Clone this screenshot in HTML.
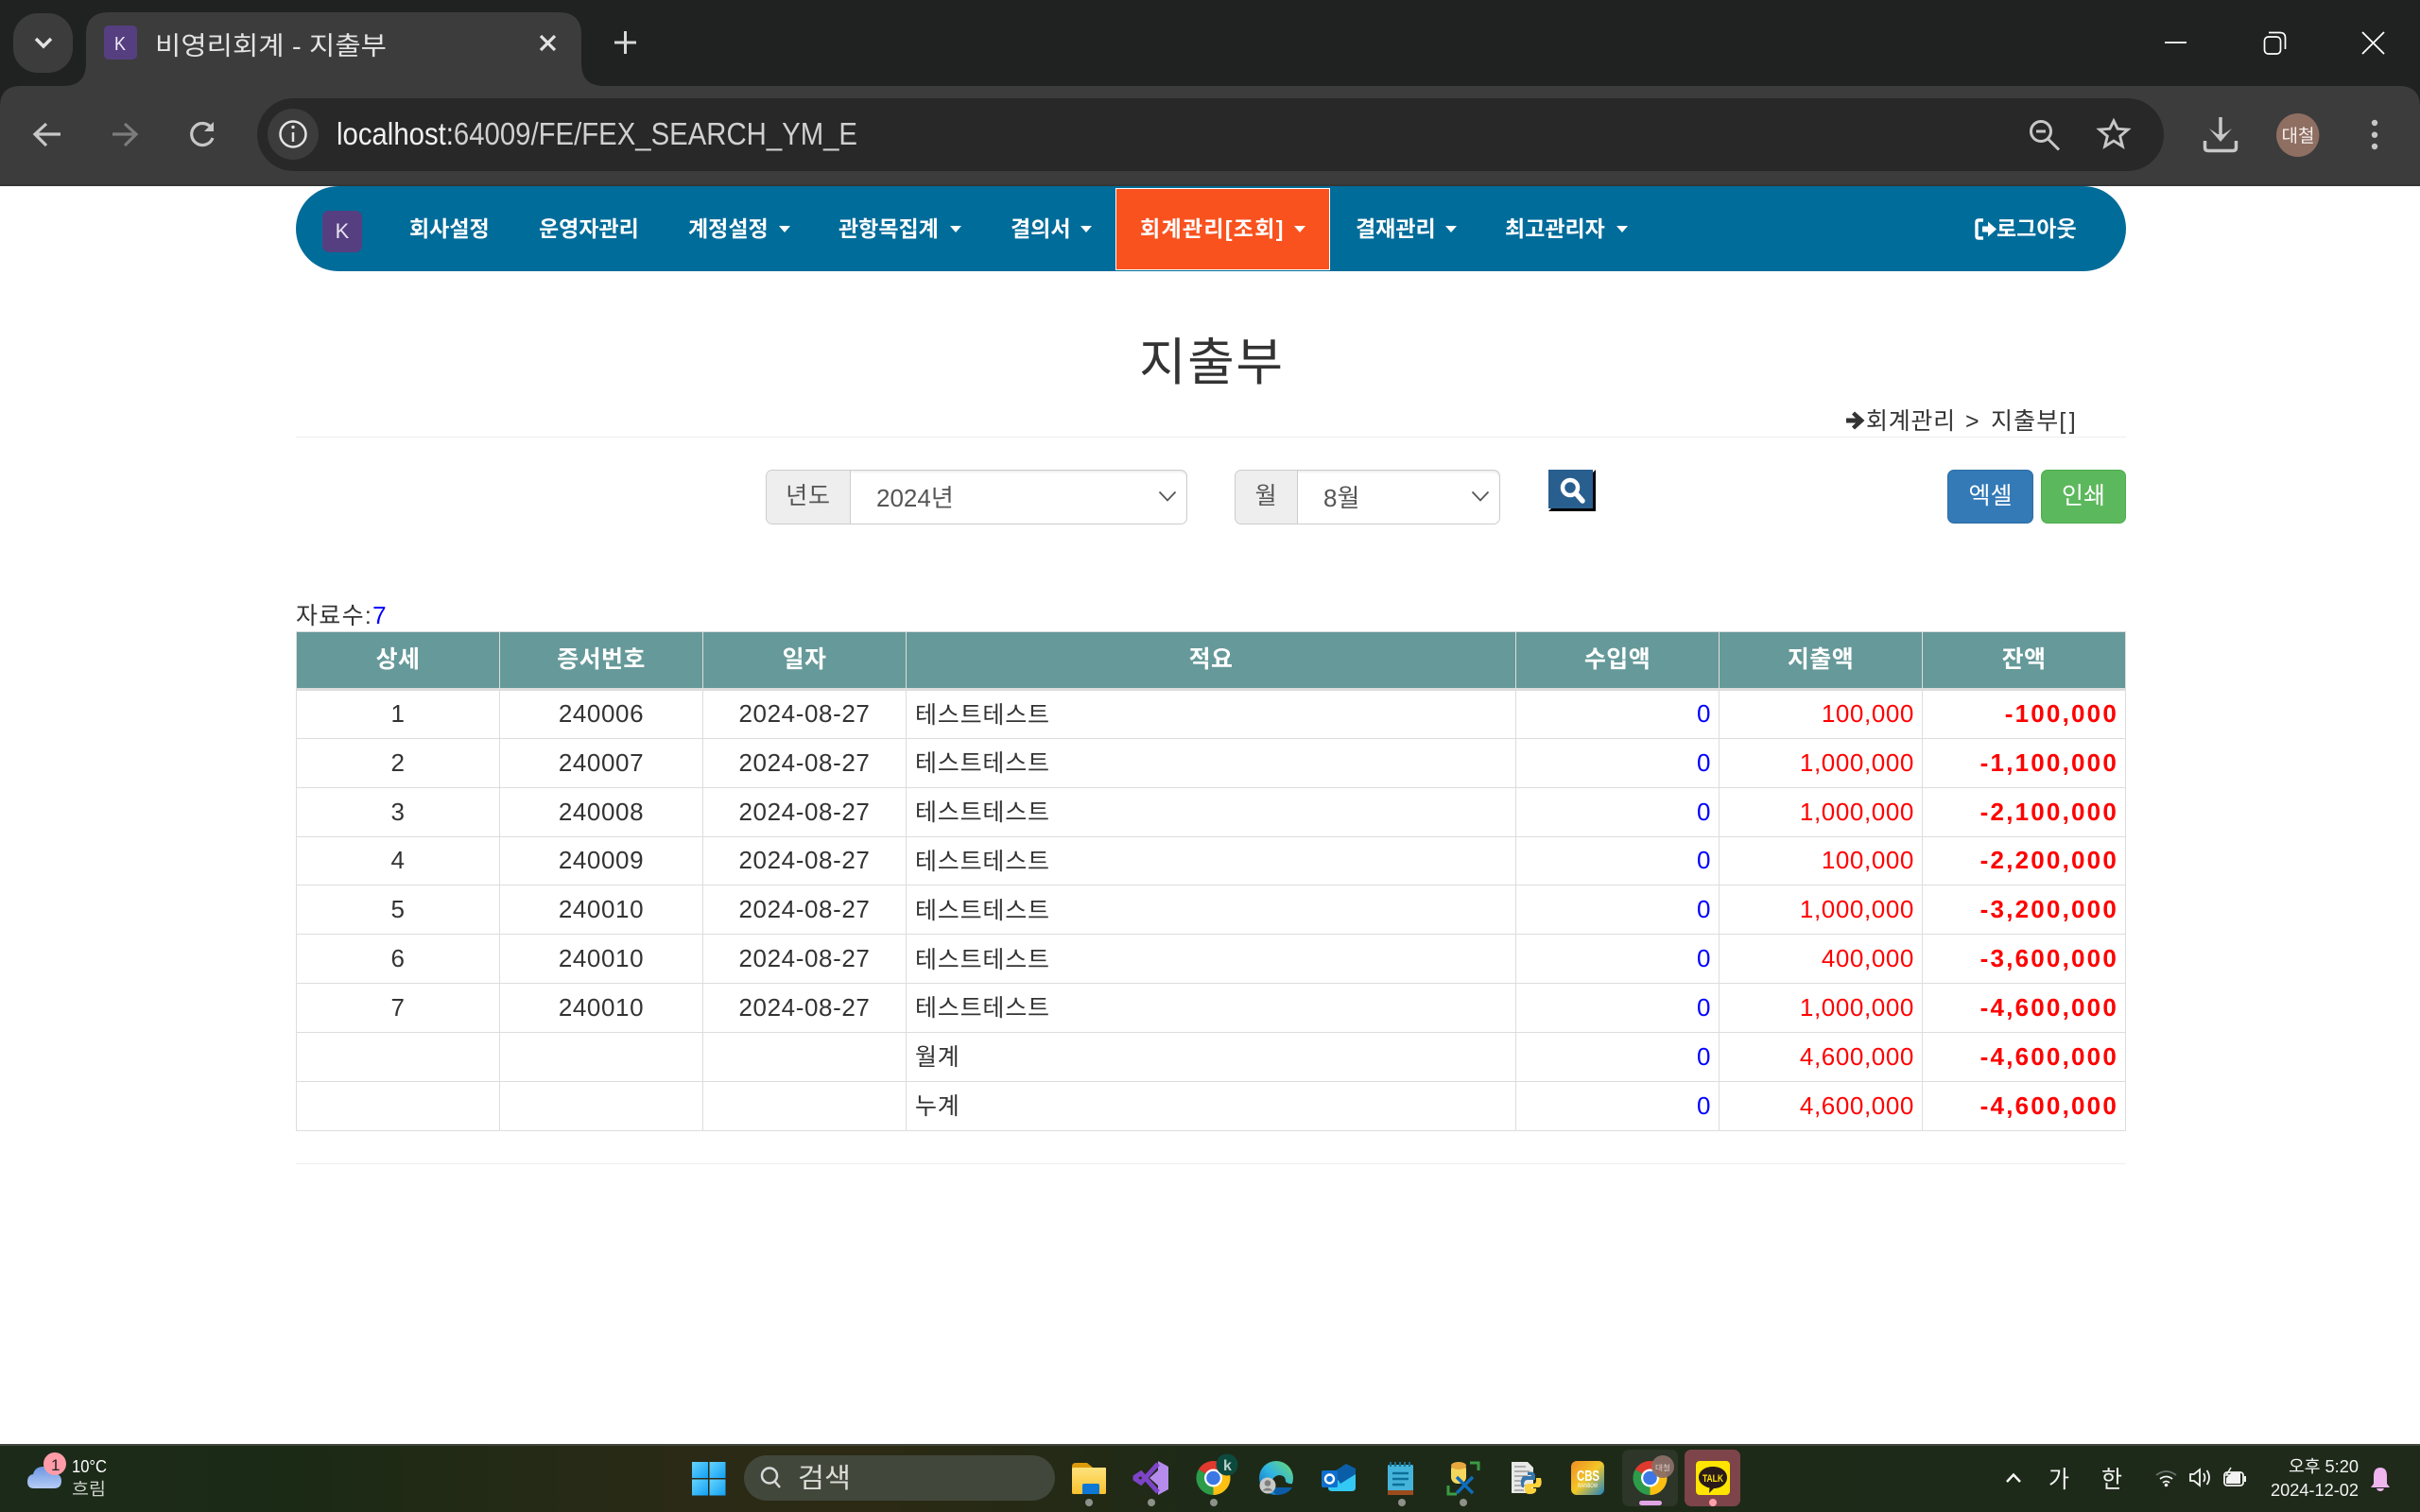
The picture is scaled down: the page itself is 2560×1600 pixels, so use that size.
<!DOCTYPE html>
<html lang="ko"><head><meta charset="utf-8"><title>비영리회계 - 지출부</title>
<style>
*{box-sizing:border-box}
html,body{margin:0;padding:0;width:2560px;height:1600px;overflow:hidden;background:#fff}
body{position:relative;font-family:"Liberation Sans","Noto Sans CJK KR",sans-serif;font-size:25px;letter-spacing:.7px;color:#333}
svg{position:absolute;left:0;display:block}
svg text{font-family:"Liberation Sans","Noto Sans CJK KR",sans-serif;letter-spacing:0}
.abs{position:absolute;white-space:nowrap}
#nav{position:absolute;left:313px;top:197px;width:1936px;height:90px;background:#006c9a;border-radius:45px/45px}
#nav a{position:absolute;top:26.500px;line-height:36px;color:#fff;font-weight:700;font-size:23px;letter-spacing:0;white-space:nowrap}
#nav i{position:absolute;top:42px;width:0;height:0;border-left:6px solid transparent;border-right:6px solid transparent;border-top:7px solid #fff}
#nav .on{position:absolute;left:867px;top:2px;width:227px;height:87px;background:#f9521e;border:1px solid #fff}
#nav .k{position:absolute;left:28px;top:26px;width:42px;height:44px;background:#553f80;border-radius:7px;color:#e8e2f0;font-size:22px;letter-spacing:0;text-align:center;line-height:44px}
.grp{position:absolute;top:497px;height:58px;border:1px solid #ccc;border-radius:7px;background:#fff;box-shadow:inset 0 2px 2px rgba(0,0,0,.07);color:#555;font-size:26px;letter-spacing:0}
.grp .ad{position:absolute;left:0;top:0;bottom:0;background:#eee;border-right:1px solid #ccc;border-radius:6px 0 0 6px;text-align:center;line-height:55px;font-size:25px;letter-spacing:.7px}
.grp .v{position:absolute;line-height:58px;top:0;white-space:nowrap}
.grp svg{top:21px}
.btn{position:absolute;top:497px;height:57px;border-radius:7px;color:#fff;text-align:center;line-height:54px;font-size:25px;letter-spacing:0}
table{position:absolute;left:313px;top:668px;width:1935px;border-collapse:collapse;table-layout:fixed;font-size:26px;letter-spacing:.6px}
th,td{border:1px solid #ddd;padding:0 8px;font-weight:400;white-space:nowrap;overflow:hidden}
th{height:61px;background:#669999;color:#fff;font-weight:700;border-bottom:3px solid #ddd;text-align:center;padding-bottom:6px;font-size:25px;letter-spacing:.4px}
td{height:51.85px;text-align:center;padding-top:0}
td.l{text-align:left;font-size:25px;letter-spacing:.8px;padding-left:9px;padding-top:0;padding-bottom:2px}
td.r{text-align:right}
.b{color:#00f}.rd{color:#f00}.bd{color:#f00;font-weight:700;letter-spacing:2.200px}
td.bd{padding-right:7px}
hr{position:absolute;left:313px;width:1936px;margin:0;border:0;height:1px;background:#eee}
</style></head><body>

<svg width="2560" height="197" style="top:0" viewBox="0 0 2560 197">
<rect width="2560" height="197" fill="#202221"/>
<path d="M0 113Q0 91 22 91H2538Q2560 91 2560 113V197H0Z" fill="#3c3c3c"/>
<rect y="195" width="2560" height="2" fill="#353535"/>
<rect x="14" y="14" width="63" height="63" rx="26" fill="#3c3c3c"/>
<path d="M38 41L46 49L54 41" fill="none" stroke="#e3e3e3" stroke-width="3.500"/>
<path d="M67 91Q91 91 91 67V37Q91 13 115 13H591Q615 13 615 37V67Q615 91 639 91Z" fill="#3c3c3c"/>
<rect x="110" y="27" width="35" height="36" rx="5" fill="#553f80"/>
<text x="121" y="53" font-size="20" fill="#f0ecf6" textLength="12" lengthAdjust="spacingAndGlyphs">K</text>
<text x="164" y="58" font-size="27" fill="#e3e3e3" textLength="245" lengthAdjust="spacingAndGlyphs">비영리회계 - 지출부</text>
<path d="M572 38L587 53M587 38L572 53" stroke="#e3e3e3" stroke-width="3.200"/>
<path d="M650 45H673M661.500 33V57" stroke="#d8d8d8" stroke-width="3"/>
<path d="M2290 45H2313" stroke="#fff" stroke-width="1.800"/>
<rect x="2395.500" y="39" width="17" height="18" rx="4" fill="none" stroke="#fff" stroke-width="1.700"/>
<path d="M2400 34.500H2412Q2417.500 34.500 2417.500 40V52" fill="none" stroke="#fff" stroke-width="1.700"/>
<path d="M2499 34L2522 57M2522 34L2499 57" stroke="#fff" stroke-width="1.800"/>
<path d="M64 142H38M49 131L37 142L49 154" fill="none" stroke="#c7c7c7" stroke-width="3.200"/>
<path d="M144 142H119M132 131L144 142L132 154" fill="none" stroke="#7c7c7c" stroke-width="3.200"/>
<path d="M224 136A11.500 11.500 0 1 0 225 146" fill="none" stroke="#c7c7c7" stroke-width="3.200"/>
<path d="M226 129V139H216Z" fill="#c7c7c7"/>
<rect x="272" y="104" width="2017" height="77" rx="38.500" fill="#282828"/>
<ellipse cx="310" cy="142" rx="27" ry="27" fill="#3c3c3c"/>
<circle cx="310" cy="142" r="13.500" fill="none" stroke="#e3e3e3" stroke-width="2.500"/>
<path d="M310 140V150" stroke="#e3e3e3" stroke-width="2.500"/><circle cx="310" cy="134.500" r="1.700" fill="#e3e3e3"/>
<text x="356" y="153" font-size="33" fill="#d0d0d0" textLength="551" lengthAdjust="spacingAndGlyphs"><tspan fill="#f1f1f1">localhost:</tspan>64009/FE/FEX_SEARCH_YM_E</text>
<circle cx="2159" cy="139" r="10.500" fill="none" stroke="#c7c7c7" stroke-width="3"/>
<path d="M2166.500 147L2178 158.500M2154 139H2164" stroke="#c7c7c7" stroke-width="3"/>
<path transform="translate(2236 142) scale(.88) translate(-2236 -142)" d="M2236 126L2240.700 135.500L2253.100 136.400L2243.600 144.500L2246.600 156.600L2236 150L2225.400 156.600L2228.400 144.500L2218.900 136.400L2231.300 135.500Z" fill="none" stroke="#c7c7c7" stroke-width="3.300"/>
<path d="M2349 124V146" stroke="#c7c7c7" stroke-width="3.500"/>
<path d="M2337 136L2349 150L2361 136L2352 142H2346Z" fill="#c7c7c7"/>
<path d="M2332.500 149V156Q2332.500 159.500 2336 159.500H2362Q2365.500 159.500 2365.500 156V149" fill="none" stroke="#c7c7c7" stroke-width="3.500"/>
<ellipse cx="2430.700" cy="143" rx="22.700" ry="23" fill="#8f6f62"/>
<text x="2413.500" y="150" font-size="19" fill="#f5f0ee" textLength="35" lengthAdjust="spacingAndGlyphs">대철</text>
<circle cx="2512" cy="130" r="3.200" fill="#c7c7c7"/><circle cx="2512" cy="142.700" r="3.200" fill="#c7c7c7"/><circle cx="2512" cy="155" r="3.200" fill="#c7c7c7"/>
</svg>

<div id="nav">
<div class="k">K</div>
<a style="left:120px">회사설정</a>
<a style="left:257px">운영자관리</a>
<a style="left:415px">계정설정</a><i style="left:511px"></i>
<a style="left:574px">관항목집계</a><i style="left:692px"></i>
<a style="left:756px">결의서</a><i style="left:830px"></i>
<div class="on"></div>
<a style="left:893px;letter-spacing:1.300px">회계관리[조회]</a><i style="left:1056px"></i>
<a style="left:1121px">결재관리</a><i style="left:1216px"></i>
<a style="left:1279px">최고관리자</a><i style="left:1397px"></i>
<svg width="24" height="26" style="left:1776px;top:33px" viewBox="0 0 24 26"><path d="M9 3H4Q2 3 2 5V20Q2 22 4 22H9" fill="none" stroke="#fff" stroke-width="3.400"/><path d="M8 9.500H14V4.500L23 12.500L14 20.500V15.500H8Z" fill="#fff"/></svg>
<a style="left:1799px">로그아웃</a>
</div>

<div class="abs" style="left:1205px;top:349px;font-size:54px;letter-spacing:1.500px;line-height:70px">지출부</div>
<svg width="22" height="22" style="left:1952px;top:434px" viewBox="0 0 22 22"><path d="M1 8.500H11L7 4.500L10 1.500L20.500 11L10 20.500L7 17.500L11 13.500H1Z" fill="#333"/></svg>
<div class="abs" style="left:1974px;top:428px;line-height:36px">회계관리</div>
<div class="abs" style="left:2079px;top:428px;line-height:36px">&gt;</div>
<div class="abs" style="left:2106px;top:428px;line-height:36px;letter-spacing:1.100px">지출부<span style="letter-spacing:3.500px">[]</span></div>
<hr style="top:462px">

<div class="grp" style="left:810px;width:446px">
<div class="ad" style="width:89px">년도</div>
<div class="v" style="left:116px">2024년</div>
<svg width="20" height="12" style="left:414px" viewBox="0 0 20 12"><path d="M1.500 1.500L10 10.500L18.500 1.500" fill="none" stroke="#555" stroke-width="1.800"/></svg>
</div>
<div class="grp" style="left:1306px;width:281px">
<div class="ad" style="width:66px">월</div>
<div class="v" style="left:93px">8월</div>
<svg width="20" height="12" style="left:249px" viewBox="0 0 20 12"><path d="M1.500 1.500L10 10.500L18.500 1.500" fill="none" stroke="#555" stroke-width="1.800"/></svg>
</div>
<div class="abs" style="left:1638px;top:497px;width:50px;height:44px;background:#000;clip-path:polygon(0 100%,3px calc(100% - 3px),calc(100% - 3px) 3px,100% 0,100% 100%)"></div>
<div class="abs" style="left:1638px;top:497px;width:47px;height:41px;background:#285f8f"></div>
<svg width="30" height="28" style="left:1649px;top:505px" viewBox="0 0 30 28"><circle cx="12" cy="11" r="8" fill="none" stroke="#fff" stroke-width="4.500"/><path d="M18 17L25 25" stroke="#fff" stroke-width="5.500" stroke-linecap="round"/></svg>
<div class="btn" style="left:2060px;width:91px;background:#337ab7;border:1px solid #2e6da4">엑셀</div>
<div class="btn" style="left:2159px;width:90px;background:#5cb85c;border:1px solid #4cae4c">인쇄</div>

<div class="abs" style="left:313px;top:633px;line-height:36px;letter-spacing:1.300px">자료수:<span class="b" style="font-size:26px">7</span></div>
<table>
<colgroup><col style="width:215px"><col style="width:215px"><col style="width:215px"><col style="width:645px"><col style="width:215px"><col style="width:215px"><col style="width:215px"></colgroup>
<thead><tr><th>상세</th><th>증서번호</th><th>일자</th><th>적요</th><th>수입액</th><th>지출액</th><th>잔액</th></tr></thead>
<tbody>
<tr><td>1</td><td>240006</td><td>2024-08-27</td><td class="l">테스트테스트</td><td class="r b">0</td><td class="r rd">100,000</td><td class="r bd">-100,000</td></tr>
<tr><td>2</td><td>240007</td><td>2024-08-27</td><td class="l">테스트테스트</td><td class="r b">0</td><td class="r rd">1,000,000</td><td class="r bd">-1,100,000</td></tr>
<tr><td>3</td><td>240008</td><td>2024-08-27</td><td class="l">테스트테스트</td><td class="r b">0</td><td class="r rd">1,000,000</td><td class="r bd">-2,100,000</td></tr>
<tr><td>4</td><td>240009</td><td>2024-08-27</td><td class="l">테스트테스트</td><td class="r b">0</td><td class="r rd">100,000</td><td class="r bd">-2,200,000</td></tr>
<tr><td>5</td><td>240010</td><td>2024-08-27</td><td class="l">테스트테스트</td><td class="r b">0</td><td class="r rd">1,000,000</td><td class="r bd">-3,200,000</td></tr>
<tr><td>6</td><td>240010</td><td>2024-08-27</td><td class="l">테스트테스트</td><td class="r b">0</td><td class="r rd">400,000</td><td class="r bd">-3,600,000</td></tr>
<tr><td>7</td><td>240010</td><td>2024-08-27</td><td class="l">테스트테스트</td><td class="r b">0</td><td class="r rd">1,000,000</td><td class="r bd">-4,600,000</td></tr>
<tr><td></td><td></td><td></td><td class="l">월계</td><td class="r b">0</td><td class="r rd">4,600,000</td><td class="r bd">-4,600,000</td></tr>
<tr><td></td><td></td><td></td><td class="l">누계</td><td class="r b">0</td><td class="r rd">4,600,000</td><td class="r bd">-4,600,000</td></tr>
</tbody></table>
<hr style="top:1231px">

<svg width="2560" height="72" style="top:1528px" viewBox="0 1528 2560 72">
<defs>
<linearGradient id="tb" x1="0" x2="1" y1="0" y2="0"><stop offset="0" stop-color="#1c2a1a"/><stop offset=".12" stop-color="#1b2a15"/><stop offset=".28" stop-color="#2a2a16"/><stop offset=".36" stop-color="#2c2a14"/><stop offset=".5" stop-color="#1d2a17"/><stop offset="1" stop-color="#1f2a1a"/></linearGradient>
<linearGradient id="win" x1="0" x2="1" y1="0" y2="1"><stop offset="0" stop-color="#66d4fb"/><stop offset="1" stop-color="#12a0f5"/></linearGradient>
<linearGradient id="cl" x1="0" x2="0" y1="0" y2="1"><stop offset="0" stop-color="#6c96e2"/><stop offset="1" stop-color="#b6cdf6"/></linearGradient>
<linearGradient id="fd" x1="0" x2="0" y1="0" y2="1"><stop offset="0" stop-color="#fde27c"/><stop offset="1" stop-color="#f9c22e"/></linearGradient>
<linearGradient id="cbs" x1="0" x2="1" y1="0" y2="1"><stop offset="0" stop-color="#f08c22"/><stop offset=".5" stop-color="#f2c828"/><stop offset="1" stop-color="#1a82c8"/></linearGradient>
<linearGradient id="ed" x1="0" x2="1" y1="1" y2="0"><stop offset="0" stop-color="#1468b8"/><stop offset=".5" stop-color="#2fb4e4"/><stop offset="1" stop-color="#6fdc6a"/></linearGradient>
<g id="cr">
<path d="M0 0L-15.600 -9A18 18 0 0 1 15.600 -9Z" fill="#e0392e"/>
<path d="M0 0L-15.600 -9A18 18 0 0 0 0 18Z" fill="#2c9c4a"/>
<path d="M0 0L0 18A18 18 0 0 0 15.600 -9Z" fill="#fbc012"/>
<circle r="9.500" fill="#fff"/><circle r="7.300" fill="#3b78e6"/>
</g>
</defs>
<rect y="1528" width="2560" height="72" fill="url(#tb)"/>
<rect y="1528" width="2560" height="2" fill="#43473f"/>

<path d="M36 1575Q29 1575 29 1568Q29 1561 35 1560Q37 1552 46 1552Q53 1552 56 1558Q65 1560 65 1567Q65 1575 57 1575Z" fill="url(#cl)"/>
<circle cx="58" cy="1549" r="12" fill="#ff9ca8"/>
<text x="54" y="1556" font-size="17" fill="#222">1</text>
<text x="76" y="1558" font-size="18" fill="#fff" textLength="37" lengthAdjust="spacingAndGlyphs">10°C</text>
<text x="76" y="1582" font-size="18" fill="#cfd2cc" textLength="36" lengthAdjust="spacingAndGlyphs">흐림</text>

<rect x="732" y="1547" width="17" height="17" fill="url(#win)"/><rect x="750.500" y="1547" width="17" height="17" fill="url(#win)"/>
<rect x="732" y="1565.500" width="17" height="17" fill="url(#win)"/><rect x="750.500" y="1565.500" width="17" height="17" fill="url(#win)"/>
<rect x="787" y="1540" width="329" height="48" rx="24" fill="#41473a"/>
<circle cx="814" cy="1561.500" r="8" fill="none" stroke="#d8d8d8" stroke-width="2.500"/><path d="M819.500 1567.500L825 1574" stroke="#d8d8d8" stroke-width="2.500"/>
<text x="844" y="1574" font-size="29" fill="#dcdcd8" textLength="56" lengthAdjust="spacingAndGlyphs">검색</text>

<path d="M1134 1552Q1134 1548 1138 1548H1150L1156 1553H1170V1560H1134Z" fill="#dc9a0a"/>
<rect x="1134" y="1553" width="36" height="28" rx="1.500" fill="url(#fd)"/>
<path d="M1145 1581V1572Q1145 1570 1147 1570H1161Q1163 1570 1163 1572V1581Z" fill="#0f78d4"/>
<circle cx="1152" cy="1590" r="4" fill="#8d918a"/>

<path d="M1225 1546L1236 1552V1576L1225 1582V1572L1216 1564L1225 1556Z" fill="#b58cec"/>
<path d="M1225 1549L1207 1569L1201 1565V1563L1207 1559L1225 1579" fill="none" stroke="#7d44c8" stroke-width="5"/>
<circle cx="1218" cy="1590" r="4" fill="#8d918a"/>

<use href="#cr" transform="translate(1283.500 1564)"/>
<circle cx="1298" cy="1550" r="11.500" fill="#0d4a3e"/>
<text x="1294" y="1556" font-size="16" font-weight="700" fill="#b8d4cc">k</text>
<circle cx="1284" cy="1590" r="4" fill="#8d918a"/>

<circle cx="1350" cy="1564" r="18" fill="url(#ed)"/>
<path d="M1345 1570Q1346 1562 1353 1561Q1360 1561 1360 1568Q1364 1571 1368.500 1570V1574H1348Q1345 1574 1345 1570Z" fill="#1e2a17"/>
<path d="M1346 1574H1367Q1362 1582 1350 1582Q1347 1580 1346 1574Z" fill="#0c5ca8"/>
<circle cx="1341" cy="1572" r="8.500" fill="#c9cac8"/><circle cx="1341" cy="1569.500" r="3.300" fill="#807f7d"/><path d="M1335.500 1577.500Q1341 1571.500 1346.500 1577.500Z" fill="#807f7d"/>

<path d="M1405 1565L1426 1550L1434 1556V1574Q1434 1578 1430 1578H1409Q1405 1578 1405 1574Z" fill="#34c8f4"/>
<path d="M1410 1558L1424 1549L1434 1554V1560L1418 1570Z" fill="#0a5ea8"/>
<rect x="1398" y="1556" width="17" height="18" rx="2" fill="#0f6fd0"/>
<circle cx="1406.500" cy="1565" r="4.500" fill="none" stroke="#fff" stroke-width="2.400"/>

<rect x="1468" y="1550" width="27" height="32" rx="1.500" fill="#44b4da"/>
<path d="M1471 1547V1552M1476 1547V1552M1481 1547V1552M1486 1547V1552M1491 1547V1552" stroke="#1a6f96" stroke-width="2"/>
<path d="M1473 1559H1490M1473 1565H1490M1473 1571H1486" stroke="#0c6f99" stroke-width="2.600"/>
<rect x="1468" y="1577" width="27" height="5" fill="#9a4c1d"/>
<circle cx="1483" cy="1590" r="4" fill="#8d918a"/>

<rect x="1535" y="1548" width="16" height="22" rx="7" fill="#f4d75c"/><ellipse cx="1543" cy="1551" rx="8" ry="4" fill="#e8a83e"/>
<path d="M1555 1548H1564V1556M1532 1572V1581H1541" fill="none" stroke="#3a9a44" stroke-width="3"/>
<path d="M1541 1580L1558 1563M1558 1580L1541 1563" stroke="#0f6cbd" stroke-width="3.400"/>
<circle cx="1548" cy="1590" r="4" fill="#8d918a"/>

<path d="M1599 1547H1616L1622 1553V1580H1599Z" fill="#e8e8e6"/>
<path d="M1602 1552H1614M1602 1557H1618M1602 1562H1616M1602 1567H1612M1602 1572H1614M1602 1577H1612" stroke="#9a9a98" stroke-width="1.500"/>
<path d="M1616 1558Q1624 1556 1624 1562V1566H1616Q1612 1566 1612 1572V1574H1610Q1607 1568 1611 1562H1620V1561H1616Z" fill="#3776ab"/>
<path d="M1625 1564H1630Q1632 1572 1628 1574H1620V1575H1625Q1626 1581 1618 1581Q1613 1581 1613 1576V1573Q1613 1570 1617 1570H1622Q1625 1570 1625 1567Z" fill="#fdd23c"/>

<rect x="1662" y="1546" width="35" height="36" rx="6" fill="url(#cbs)"/>
<text x="1668" y="1567" font-size="16" font-weight="700" fill="#fff" textLength="24" lengthAdjust="spacingAndGlyphs">CBS</text>
<text x="1669" y="1574" font-size="6" fill="#fff" textLength="21" lengthAdjust="spacingAndGlyphs">RAINBOW</text>

<rect x="1716" y="1534" width="59" height="60" rx="7" fill="#2e3529"/>
<use href="#cr" transform="translate(1745.500 1564)"/>
<circle cx="1759" cy="1552" r="12" fill="#8a6f66" opacity=".95"/>
<text x="1751" y="1556" font-size="8" fill="#d9cdc8" textLength="16" lengthAdjust="spacingAndGlyphs">대철</text>
<rect x="1734" y="1588" width="24" height="5" rx="2.500" fill="#e0a4e4"/>

<rect x="1782" y="1534" width="59" height="60" rx="7" fill="#7d444a"/>
<rect x="1794" y="1546" width="36" height="36" rx="4" fill="#ffe500"/>
<path d="M1812 1552C1821 1552 1827 1557 1827 1563.500C1827 1570 1821 1575 1813 1575L1808 1580L1808.500 1574.500C1802 1573 1797 1569 1797 1563.500C1797 1557 1803 1552 1812 1552Z" fill="#2a1a1a"/>
<text x="1801" y="1568" font-size="11" font-weight="700" fill="#ffe500" textLength="22" lengthAdjust="spacingAndGlyphs">TALK</text>
<circle cx="1812" cy="1590" r="4" fill="#ffa0a8"/>

<path d="M2123 1568L2130 1560.500L2137 1568" fill="none" stroke="#fff" stroke-width="2.400"/>
<text x="2167" y="1574" font-size="25" fill="#f2f2f2" textLength="22" lengthAdjust="spacingAndGlyphs">가</text>
<text x="2223" y="1574" font-size="25" fill="#f2f2f2" textLength="22" lengthAdjust="spacingAndGlyphs">한</text>
<path d="M2281 1561Q2291.500 1553 2302 1561" fill="none" stroke="#68706a" stroke-width="1.800"/>
<path d="M2285 1565Q2291.500 1560 2298 1565M2288 1569Q2291.500 1566 2295 1569" fill="none" stroke="#f2f2f2" stroke-width="1.800"/>
<circle cx="2291.500" cy="1571.500" r="1.800" fill="#f2f2f2"/>
<path d="M2317 1560H2321L2327 1555V1572L2321 1567H2317Z" fill="none" stroke="#f2f2f2" stroke-width="1.800"/>
<path d="M2331 1559Q2334 1563.500 2331 1568M2334.500 1556Q2339.500 1563.500 2334.500 1571" fill="none" stroke="#f2f2f2" stroke-width="1.800"/>
<rect x="2353" y="1558" width="20" height="14" rx="3" fill="none" stroke="#f2f2f2" stroke-width="1.800"/>
<rect x="2374" y="1562" width="2" height="6" fill="#f2f2f2"/>
<path d="M2355 1570V1564L2361 1558H2370V1570Z" fill="#f2f2f2"/>
<path d="M2360 1553L2355 1561H2361L2356 1568" fill="none" stroke="#f2f2f2" stroke-width="1.500"/>
<text x="2421" y="1558" font-size="18" fill="#f4f4f4" textLength="74" lengthAdjust="spacingAndGlyphs">오후 5:20</text>
<text x="2402" y="1583" font-size="18" fill="#f4f4f4" textLength="93" lengthAdjust="spacingAndGlyphs">2024-12-02</text>
<path d="M2518 1553Q2525 1553 2525 1562V1570L2528 1574H2508L2511 1570V1562Q2511 1553 2518 1553Z" fill="#eeb5ef"/>
<path d="M2514 1575H2522Q2521 1578 2518 1578Q2515 1578 2514 1575Z" fill="#eeb5ef"/>
</svg>
</body></html>
